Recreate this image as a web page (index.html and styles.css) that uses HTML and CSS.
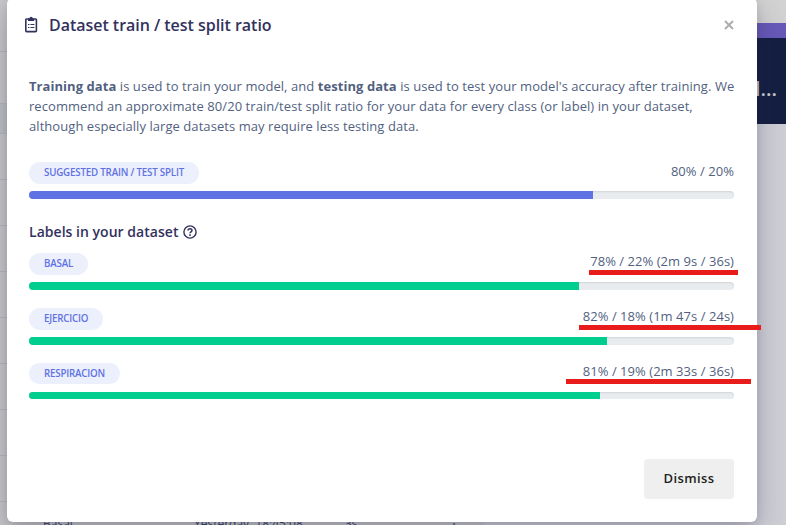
FILE: index.html
```html
<!DOCTYPE html>
<html lang="en">
<head>
<meta charset="utf-8">
<title>Dataset train / test split ratio</title>
<link rel="stylesheet" href="styles.css">
</head>
<body>
<div class="page">
  <div class="table">
    <div class="tr first"></div>
    <div class="tr second"></div>
    <div class="tr head"></div>
    <div class="tr"></div><div class="tr"></div><div class="tr"></div><div class="tr"></div>
    <div class="tr"></div><div class="tr"></div><div class="tr"></div><div class="tr"></div>
    <div class="tr data"><span>Basal</span><span>Yesterday, 18:45:08</span><span>3s</span><span>⋮</span></div>
  </div>
  <div class="side">
    <div class="strip"></div>
    <div class="panel">d...</div>
  </div>
</div>

<div class="modal">
  <header class="header">
    <svg class="clip" width="14" height="18" viewBox="0 0 14 18">
      <rect x="1.8" y="3" width="10.6" height="12.6" rx=".8" fill="none" stroke="currentColor" stroke-width="1.6"/>
      <path d="M4 2.5h1.4a1.7 1.7 0 0 1 3.4 0h1.4V5H4z" fill="currentColor"/>
      <path d="M4 8.5h1.4M6.4 8.5h4M4 11.5h1.4M6.4 11.5h4" stroke="currentColor" stroke-width="1"/>
    </svg>
    <h1>Dataset train / test split ratio</h1>
    <svg class="close" width="10" height="10" viewBox="0 0 10 10"><path d="M1 1l8 8M9 1l-8 8" stroke="currentColor" stroke-width="1.9"/></svg>
  </header>
  <p class="intro"><b>Training data</b> is used to train your model, and <b>testing data</b> is used to test your model's accuracy after training. We<br>recommend an approximate 80/20 train/test split ratio for your data for every class (or label) in your dataset,<br>although especially large datasets may require less testing data.</p>

  <section class="split suggested">
    <div class="line"><span class="pill">SUGGESTED TRAIN / TEST SPLIT</span><span class="ratio">80% / 20%</span></div>
    <div class="bar"><div class="fill" style="width:80%"></div></div>
  </section>

  <h2>Labels in your dataset
    <svg width="14" height="14" viewBox="0 0 14 14"><circle cx="7" cy="7" r="6.1" fill="none" stroke="currentColor" stroke-width="1.4"/><path d="M5 5.6C5 3.1 9 3.2 9 5.4 9 6.8 7 6.8 7 8.3M7 9.3v1.6" fill="none" stroke="currentColor" stroke-width="1.5"/></svg>
  </h2>

  <section class="split">
    <div class="line"><span class="pill">BASAL</span><span class="ratio">78% / 22% (2m 9s / 36s)</span></div>
    <div class="bar"><div class="fill" style="width:78%"></div></div>
    <i class="mark m1"></i>
  </section>
  <section class="split">
    <div class="line"><span class="pill">EJERCICIO</span><span class="ratio">82% / 18% (1m 47s / 24s)</span></div>
    <div class="bar"><div class="fill" style="width:82%"></div></div>
    <i class="mark m2"></i>
  </section>
  <section class="split last">
    <div class="line"><span class="pill">RESPIRACION</span><span class="ratio">81% / 19% (2m 33s / 36s)</span></div>
    <div class="bar"><div class="fill" style="width:81%"></div></div>
    <i class="mark m3"></i>
  </section>

  <footer class="footer"><button>Dismiss</button></footer>
</div>
</body>
</html>
```
FILE: styles.css
```css
* { box-sizing: border-box; }
body {
  margin: 0;
  width: 786px;
  height: 525px;
  overflow: hidden;
  position: relative;
  background: #cfd0d5;
  font-family: "Open Sans", "Noto Sans", sans-serif;
  font-size: 13px;
  color: #525f7f;
}
.page { display: flex; justify-content: space-between; height: 525px; overflow: hidden; }
.table { width: 484px; background: #c9c9ca; }
.tr { height: 46px; border-bottom: 1px solid #b9babd; }
.tr.first { height: 52px; }
.tr.second { height: 52px; }
.tr.head { height: 30px; background: #bec2c6; }
.tr.data { display: flex; padding: 14px 24px 0 43px; font-size: 12px; line-height: 16px; color: #3a4268; border: 0; }
.tr.data span:nth-child(1) { width: 151px; }
.tr.data span:nth-child(2) { width: 151px; }
.tr.data span:nth-child(3) { flex: 1; }
.side { width: 36px; padding-top: 23px; background: linear-gradient(#d3d3d3 23px, #cfd0d5 23px); }
.strip { height: 15px; background: #6759b8; }
.panel {
  height: 86px;
  padding: 35px 9px 0 0;
  background: #131e40;
  color: #c9cbd0;
  font-size: 20px;
  font-weight: 600;
  line-height: 32px;
  display: flex;
  justify-content: flex-end;
}
.modal {
  position: absolute;
  left: 7px;
  top: -2px;
  width: 750px;
  height: 524px;
  padding: 2px 23px 0 22px;
  background: #fff;
  border-radius: 6px;
  box-shadow: 0 12px 32px rgba(50, 50, 93, .28), 0 4px 12px rgba(0, 0, 0, .12);
}
.header { display: flex; align-items: center; height: 50px; color: #32325d; }
.clip { margin-left: -5px; margin-right: 11px; }
h1 { margin: 0; font-size: 16px; font-weight: 600; line-height: 24px; letter-spacing: -.03px; flex: 1; }
.close { color: #adadad; }
.intro { margin: 26px 0 0; line-height: 20px; letter-spacing: .06px; white-space: nowrap; }
.intro b { font-weight: 700; }
.split { position: relative; height: 55px; }
.suggested { margin-top: 26px; height: 59px; }
.line { display: flex; justify-content: space-between; height: 29px; }
.pill {
  height: 22px;
  padding: 0 15px;
  border-radius: 11px;
  background: #eceffc;
  color: #5e72e4;
  font-size: 9.75px;
  font-weight: 600;
  letter-spacing: -.19px;
  line-height: 22px;
}
.ratio { line-height: 20px; margin-top: -2px; letter-spacing: .04px; }
.suggested .ratio { margin-top: -1px; }
.bar { height: 8px; border-radius: 4px; overflow: hidden; background: #e9ecef; box-shadow: inset 0 1px 2px rgba(0, 0, 0, .1); }
.fill { height: 100%; background: #00ce8f; }
.suggested .fill { background: #5e72e4; }
.last .pill { height: 21px; line-height: 21px; }
.last .bar { height: 7px; }
h2 { display: flex; align-items: center; gap: 4px; margin: 0 0 11px; height: 21px; font-size: 14px; font-weight: 600; letter-spacing: .03px; color: #32325d; }
.mark { position: absolute; height: 5px; background: #e91c1c; }
.m1 { left: 560px; top: 17px; width: 149px; }
.m2 { left: 550px; top: 17px; width: 182px; }
.m3 { left: 537px; top: 16px; width: 185px; }
.footer { display: flex; justify-content: flex-end; margin-top: 41px; }
button { width: 90px; height: 40px; padding: 0 0 3px; border: 0; border-radius: 4px; background: #efefef; color: #212121; font: 600 13px "Open Sans", sans-serif; letter-spacing: .4px; }
```
